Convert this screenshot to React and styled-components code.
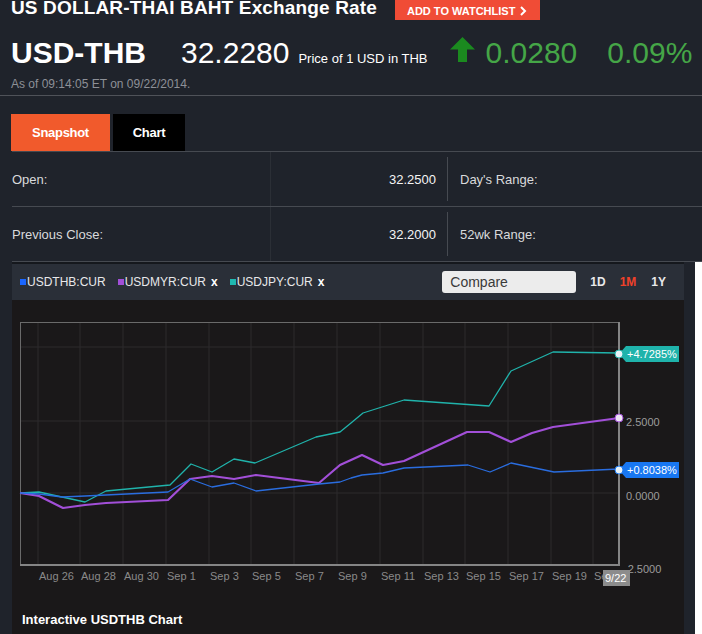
import styled, { createGlobalStyle } from "styled-components";

const GlobalStyle = createGlobalStyle`
  body {
    margin: 0;
    background: #1f232b;
    font-family: "Liberation Sans", Arial, sans-serif;
    color: #fff;
    overflow: hidden;
  }
`;

const GRID_X = [38, 80, 123, 166, 209, 251, 294, 337, 380, 423, 465, 508, 551, 593];
const DATES = ["Aug 26", "Aug 28", "Aug 30", "Sep 1", "Sep 3", "Sep 5", "Sep 7", "Sep 9", "Sep 11", "Sep 13", "Sep 15", "Sep 17", "Sep 19", "Sep 21"];

const SERIES = [
  {
    color: "#20b3ab",
    width: 1.3,
    pts: [[20, 493], [39, 492], [62, 497], [85, 502], [106, 491], [170, 485], [191, 464], [212, 472], [234, 459], [255, 463], [316, 437], [340, 432], [351, 423], [363, 413], [404, 400], [489, 406], [511, 371], [553, 352], [619, 353]],
  },
  {
    color: "#a24fd8",
    width: 2.2,
    pts: [[20, 493], [39, 496], [63, 508], [85, 505], [106, 503], [168, 500], [190, 479], [212, 476], [234, 479], [256, 475], [319, 483], [340, 465], [351, 460], [362, 455], [383, 465], [404, 461], [467, 432], [489, 432], [511, 442], [532, 433], [553, 427], [619, 418]],
  },
  {
    color: "#2a6ddf",
    width: 1.3,
    pts: [[20, 493], [39, 494], [62, 497], [85, 496], [168, 492], [190, 479], [212, 487], [234, 483], [256, 491], [319, 484], [340, 482], [351, 478], [362, 475], [383, 473], [404, 468], [468, 465], [490, 472], [511, 463], [554, 472], [619, 469]],
  },
];

const Page = styled.div`
  width: 702px;
  height: 634px;
  overflow: hidden;
`;

const Header = styled.div`
  display: flow-root;
  padding: 0 0 0 11px;
  height: 95px;
  border-bottom: 1px solid #4f5259;
`;

const TitleRow = styled.div`
  display: flex;
  align-items: flex-start;
  gap: 18px;
  margin-top: -2px;
`;

const Title = styled.h1`
  margin: 0;
  font-size: 19px;
  line-height: 19px;
  font-weight: 700;
  letter-spacing: 0.15px;
  color: #fff;
`;

const WatchButton = styled.button`
  display: flex;
  align-items: center;
  gap: 5px;
  margin-top: 2px;
  height: 20px;
  padding: 1px 13px 0 12px;
  border: 0;
  background: #f04c36;
  color: #fff;
  font-family: inherit;
  font-size: 11px;
  font-weight: 700;
`;

const QuoteRow = styled.div`
  display: flex;
  align-items: baseline;
  margin-top: 16px;
  height: 30px;
`;

const Symbol = styled.span`
  font-size: 30px;
  font-weight: 700;
  margin-right: 35px;
`;

const BigNum = styled.span`
  font-size: 30px;
  color: ${(p) => p.$color || "#fff"};
  margin-right: ${(p) => p.$gap || 0}px;
`;

const Note = styled.span`
  font-size: 13px;
  margin-right: 22px;
`;

const Arrow = styled.svg`
  align-self: flex-start;
  margin-top: 1px;
  margin-right: 11px;
`;

const Stamp = styled.div`
  margin-top: 11px;
  font-size: 12px;
  color: #8d9097;
`;

const Tabs = styled.div`
  display: flex;
  gap: 3px;
  padding: 18px 0 0 11px;
  height: 37px;
`;

const Tab = styled.div`
  display: flex;
  align-items: center;
  justify-content: center;
  width: ${(p) => p.$w}px;
  background: ${(p) => (p.$active ? "#f15a2c" : "#000")};
  color: #fff;
  font-size: 13px;
  font-weight: 700;
  letter-spacing: -0.3px;
`;

const Stats = styled.div`
  margin-left: 12px;
  border-top: 1px solid #464a51;
`;

const StatRow = styled.div`
  display: grid;
  grid-template-columns: 259px 177px 1fr;
  height: 54px;
  border-bottom: 1px solid #464a51;
`;

const Cell = styled.div`
  position: relative;
  display: flex;
  align-items: center;
  justify-content: ${(p) => (p.$right ? "flex-end" : "flex-start")};
  padding: ${(p) => (p.$right ? "0 12px 0 0" : p.$pad ? "0 0 0 12px" : "0")};
  font-size: 13px;
  color: ${(p) => (p.$right ? "#f4f4f4" : "#d9dadc")};
  border-right: ${(p) => (p.$line ? "1px solid #2b2f36" : "0")};
  &::after {
    content: "";
    display: ${(p) => (p.$right ? "block" : "none")};
    position: absolute;
    right: 0;
    top: 5px;
    bottom: 5px;
    border-right: 1px solid #464a51;
  }
`;

const ChartRow = styled.div`
  display: flex;
  height: 372px;
`;

const Panel = styled.div`
  margin-left: 12px;
  width: 672px;
  background: #1a1819;
  border-top: 2px solid #15181d;
  display: flex;
  flex-direction: column;
`;

const WhiteStrip = styled.div`
  margin-left: 11px;
  flex: 1;
  background: #fff;
`;

const Toolbar = styled.div`
  display: flex;
  align-items: center;
  height: 36px;
  padding: 0 18px 0 8px;
  background: #2a2f38;
`;

const Legend = styled.div`
  display: flex;
  align-items: center;
  gap: 12px;
  flex: 1;
`;

const LegendItem = styled.span`
  display: flex;
  align-items: center;
  font-size: 12px;
  color: #e8e8ea;
  b {
    color: #fff;
    margin-left: 5px;
  }
  &::before {
    content: "";
    width: 6px;
    height: 6px;
    margin-right: 1px;
    background: ${(p) => p.$color};
  }
`;

const Compare = styled.div`
  width: 126px;
  height: 22px;
  padding-left: 8px;
  display: flex;
  align-items: center;
  border-radius: 3px;
  background: #ececec;
  color: #3a3a3a;
  font-size: 14px;
  margin-right: 14px;
`;

const Range = styled.span`
  font-size: 12px;
  font-weight: 700;
  margin-left: ${(p) => p.$gap}px;
  color: ${(p) => (p.$active ? "#f0412a" : "#e8e8ea")};
`;

const Plot = styled.svg`
  display: block;
`;

const Caption = styled.div`
  padding: 12px 0 0 10px;
  font-size: 13px;
  font-weight: 700;
  color: #fff;
`;

const Tag = ({ y, color, label }) => (
  <g>
    <polygon points={`619,${y} 626,${y - 8} 679,${y - 8} 679,${y + 8} 626,${y + 8}`} fill={color} />
    <circle cx="619" cy={y} r="4" fill="#e9f3f8" stroke={color} strokeWidth="1" />
    <text x="627" y={y + 4} fontSize="11" fill="#fff">{label}</text>
  </g>
);

const Chart = () => (
  <Plot width="672" height="300" viewBox="12 300 672 300">
    {GRID_X.map((x) => (
      <line key={x} x1={x} y1="322" x2={x} y2="565" stroke="#2c2b2c" />
    ))}
    {[347, 421, 493].map((y) => (
      <line key={y} x1="20" y1={y} x2="619" y2={y} stroke="#2c2b2c" />
    ))}
    <line x1="20" y1="322.5" x2="619" y2="322.5" stroke="#6a6a6a" />
    <line x1="20.5" y1="322" x2="20.5" y2="565" stroke="#6a6a6a" />
    <line x1="619" y1="322" x2="619" y2="566" stroke="#858585" strokeWidth="2" />
    <line x1="20" y1="565" x2="620" y2="565" stroke="#858585" strokeWidth="2" />
    {SERIES.map((s) => (
      <polyline key={s.color} points={s.pts.map((p) => p.join(",")).join(" ")} fill="none" stroke={s.color} strokeWidth={s.width} strokeLinejoin="round" />
    ))}
    <circle cx="619" cy="418" r="4" fill="#efe6f6" stroke="#a24fd8" />
    <text x="626" y="426" fontSize="11" fill="#9c9c9c">2.5000</text>
    <text x="626" y="500" fontSize="11" fill="#9c9c9c">0.0000</text>
    <text x="624" y="573" fontSize="11" fill="#9c9c9c">-2.5000</text>
    {DATES.map((d, i) => (
      <text key={d} x={GRID_X[i] + 1} y="580" fontSize="11" fill="#8a8a8a">{d}</text>
    ))}
    <rect x="603" y="570" width="27" height="16" fill="#8c8c8c" />
    <text x="605" y="582" fontSize="11" fill="#fff">9/22</text>
    <Tag y={354} color="#1fb3ab" label="+4.7285%" />
    <Tag y={470} color="#1877f2" label="+0.8038%" />
  </Plot>
);

export default function App() {
  return (
    <Page>
      <GlobalStyle />
      <Header>
        <TitleRow>
          <Title>US DOLLAR-THAI BAHT Exchange Rate</Title>
          <WatchButton>
            ADD TO WATCHLIST
            <svg width="7" height="10" viewBox="0 0 7 10">
              <path d="M1 1 L5 5 L1 9" fill="none" stroke="#fff" strokeWidth="2" />
            </svg>
          </WatchButton>
        </TitleRow>
        <QuoteRow>
          <Symbol>USD-THB</Symbol>
          <BigNum $gap={9}>32.2280</BigNum>
          <Note>Price of 1 USD in THB</Note>
          <Arrow width="25" height="25" viewBox="0 0 25 25">
            <path d="M12.5 0 L25 12.5 L17 12.5 L17 25 L8 25 L8 12.5 L0 12.5 Z" fill="#1b8a1f" />
          </Arrow>
          <BigNum $color="#45a647" $gap={30}>0.0280</BigNum>
          <BigNum $color="#45a647">0.09%</BigNum>
        </QuoteRow>
        <Stamp>As of 09:14:05 ET on 09/22/2014.</Stamp>
      </Header>
      <Tabs>
        <Tab $active $w={99}>Snapshot</Tab>
        <Tab $w={72}>Chart</Tab>
      </Tabs>
      <Stats>
        <StatRow>
          <Cell $line>Open:</Cell>
          <Cell $right>32.2500</Cell>
          <Cell $pad>Day's Range:</Cell>
        </StatRow>
        <StatRow>
          <Cell $line>Previous Close:</Cell>
          <Cell $right>32.2000</Cell>
          <Cell $pad>52wk Range:</Cell>
        </StatRow>
      </Stats>
      <ChartRow>
        <Panel>
          <Toolbar>
            <Legend>
              <LegendItem $color="#1a66ff">USDTHB:CUR</LegendItem>
              <LegendItem $color="#a24fd8">USDMYR:CUR<b>x</b></LegendItem>
              <LegendItem $color="#1fb8b0">USDJPY:CUR<b>x</b></LegendItem>
            </Legend>
            <Compare>Compare</Compare>
            <Range $gap={0}>1D</Range>
            <Range $gap={14} $active>1M</Range>
            <Range $gap={15}>1Y</Range>
          </Toolbar>
          <Chart />
          <Caption>Interactive USDTHB Chart</Caption>
        </Panel>
        <WhiteStrip />
      </ChartRow>
    </Page>
  );
}
